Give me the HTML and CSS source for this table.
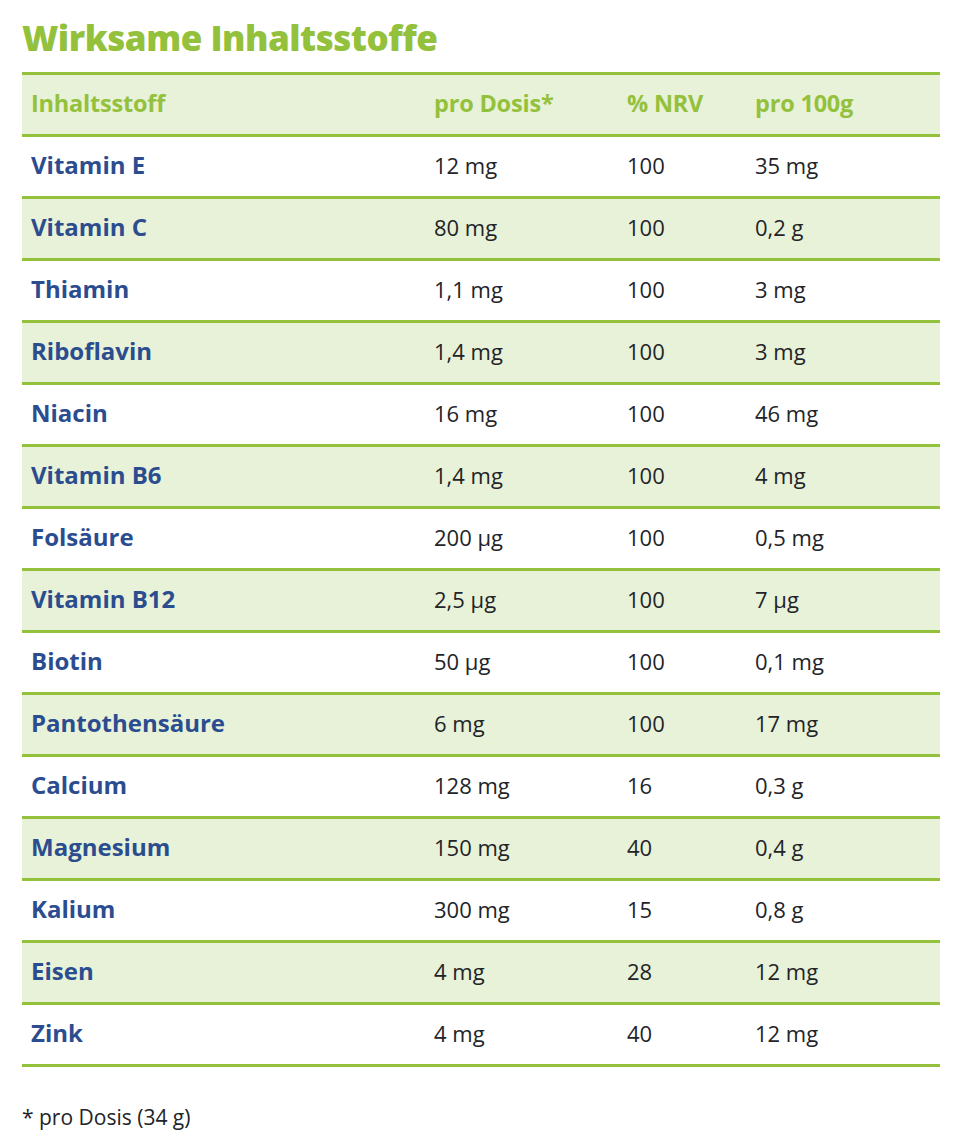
FILE: index.html
```html
<!DOCTYPE html>
<html lang="de">
<head>
<meta charset="utf-8">
<title>Wirksame Inhaltsstoffe</title>
<link rel="stylesheet" href="styles.css">
</head>
<body>
<main class="page">
  <h2 class="title">Wirksame Inhaltsstoffe</h2>
  <table class="nutri">
    <colgroup>
      <col class="c1"><col class="c2"><col class="c3"><col class="c4">
    </colgroup>
    <thead>
      <tr><th>Inhaltsstoff</th><th>pro Dosis*</th><th>% NRV</th><th>pro 100g</th></tr>
    </thead>
    <tbody>
      <tr><th>Vitamin E</th><td>12 mg</td><td>100</td><td>35 mg</td></tr>
      <tr><th>Vitamin C</th><td>80 mg</td><td>100</td><td>0,2 g</td></tr>
      <tr><th>Thiamin</th><td>1,1 mg</td><td>100</td><td>3 mg</td></tr>
      <tr><th>Riboflavin</th><td>1,4 mg</td><td>100</td><td>3 mg</td></tr>
      <tr><th>Niacin</th><td>16 mg</td><td>100</td><td>46 mg</td></tr>
      <tr><th>Vitamin B6</th><td>1,4 mg</td><td>100</td><td>4 mg</td></tr>
      <tr><th>Folsäure</th><td>200 µg</td><td>100</td><td>0,5 mg</td></tr>
      <tr><th>Vitamin B12</th><td>2,5 µg</td><td>100</td><td>7 µg</td></tr>
      <tr><th>Biotin</th><td>50 µg</td><td>100</td><td>0,1 mg</td></tr>
      <tr><th>Pantothensäure</th><td>6 mg</td><td>100</td><td>17 mg</td></tr>
      <tr><th>Calcium</th><td>128 mg</td><td>16</td><td>0,3 g</td></tr>
      <tr><th>Magnesium</th><td>150 mg</td><td>40</td><td>0,4 g</td></tr>
      <tr><th>Kalium</th><td>300 mg</td><td>15</td><td>0,8 g</td></tr>
      <tr><th>Eisen</th><td>4 mg</td><td>28</td><td>12 mg</td></tr>
      <tr><th>Zink</th><td>4 mg</td><td>40</td><td>12 mg</td></tr>
    </tbody>
  </table>
  <p class="note">* pro Dosis (34 g)</p>
</main>
</body>
</html>
```
FILE: styles.css
```css
html, body {
  margin: 0;
  padding: 0;
  background: #ffffff;
}
.page {
  padding: 18px 24px 0 22px;
  font-family: "Open Sans", "Noto Sans", sans-serif;
  color: #222428;
}
.title {
  margin: 0 0 14px 0;
  font-size: 35px;
  line-height: 40px;
  font-weight: 800;
  color: #94c13c;
  letter-spacing: -0.5px;
}
.nutri {
  width: 918px;
  border-collapse: collapse;
  table-layout: fixed;
  font-size: 22px;
}
.c1 { width: 403px; }
.c2 { width: 193px; }
.c3 { width: 128px; }
.c4 { width: 194px; }
.nutri th, .nutri td {
  height: 56px;
  padding: 0 0 3px 9px;
  text-align: left;
  vertical-align: middle;
  line-height: 28px;
}
.nutri thead tr {
  border-top: 3px solid #94c13c;
  border-bottom: 3px solid #94c13c;
  background: #e8f2d8;
}
.nutri thead th {
  color: #94c13c;
  font-weight: 700;
  font-size: 23.5px;
  letter-spacing: -0.2px;
}
.nutri tbody tr {
  border-bottom: 3px solid #94c13c;
}
.nutri tbody tr:nth-child(even) {
  background: #e8f2d8;
}
.nutri tbody th {
  color: #2b4d8f;
  font-weight: 700;
  font-size: 24px;
}
.nutri tbody td {
  font-weight: 400;
}
.note {
  margin: 36px 0 0 0;
  font-size: 21px;
  line-height: 28px;
}
```
